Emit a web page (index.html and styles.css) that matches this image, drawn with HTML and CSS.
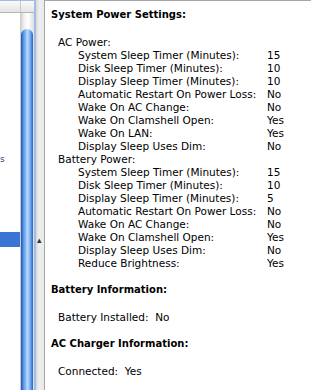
FILE: index.html
```html
<!DOCTYPE html>
<html lang="en">
<head>
    <meta charset="UTF-8">
    <title>System Power Settings</title>
    <link rel="stylesheet" href="styles.css">
</head>
<body>

    <div class="window">

        <div class="source">
            <div class="source-head">
                <div class="head-cell"></div>
                <div class="head-corner"></div>
            </div>
            <div class="source-body">
                <div class="rows">
                    <div class="row-mark">s</div>
                    <div class="row-selected"></div>
                </div>
                <div class="scrollbar">
                    <div class="thumb"></div>
                </div>
            </div>
        </div>

        <div class="splitter">
            <span class="grip">&#9652;</span>
        </div>

        <div class="detail">
            <div class="title">System Power Settings:</div>

            <div class="group">AC Power:</div>
            <div class="item"><span class="key">System Sleep Timer (Minutes):</span><span>15</span></div>
            <div class="item"><span class="key">Disk Sleep Timer (Minutes):</span><span>10</span></div>
            <div class="item"><span class="key">Display Sleep Timer (Minutes):</span><span>10</span></div>
            <div class="item"><span class="key">Automatic Restart On Power Loss:</span><span>No</span></div>
            <div class="item"><span class="key">Wake On AC Change:</span><span>No</span></div>
            <div class="item"><span class="key">Wake On Clamshell Open:</span><span>Yes</span></div>
            <div class="item"><span class="key">Wake On LAN:</span><span>Yes</span></div>
            <div class="item"><span class="key">Display Sleep Uses Dim:</span><span>No</span></div>

            <div class="group tight">Battery Power:</div>
            <div class="item"><span class="key">System Sleep Timer (Minutes):</span><span>15</span></div>
            <div class="item"><span class="key">Disk Sleep Timer (Minutes):</span><span>10</span></div>
            <div class="item"><span class="key">Display Sleep Timer (Minutes):</span><span>5</span></div>
            <div class="item"><span class="key">Automatic Restart On Power Loss:</span><span>No</span></div>
            <div class="item"><span class="key">Wake On AC Change:</span><span>No</span></div>
            <div class="item"><span class="key">Wake On Clamshell Open:</span><span>Yes</span></div>
            <div class="item"><span class="key">Display Sleep Uses Dim:</span><span>No</span></div>
            <div class="item"><span class="key">Reduce Brightness:</span><span>Yes</span></div>

            <div class="title section">Battery Information:</div>
            <div class="pair">Battery Installed:&nbsp;&nbsp;No</div>

            <div class="title section">AC Charger Information:</div>
            <div class="pair">Connected:&nbsp;&nbsp;Yes</div>
        </div>

    </div>

</body>
</html>
```

FILE: styles.css
```css
body {
    margin: 0;
    padding: 0;
    background-color: #e8e8e8;
    font-family: 'DejaVu Sans', sans-serif;
    font-size: 10.5px;
    color: #000;
    overflow: hidden;
}
.window {
    display: flex;
    height: 390px;
    width: 311px;
}
.source {
    width: 34px;
    display: flex;
    flex-direction: column;
    border-right: 2px solid #9fbde6;
    border-top: 1px solid #9fbde6;
    background-color: #fff;
}
.source-head {
    display: flex;
    height: 11px;
    background: linear-gradient(#fbfbfb, #e4e4e4);
    border-bottom: 1px solid #b4b4b4;
}
.head-cell {
    width: 20px;
    border-right: 1px solid #c8c8c8;
}
.head-corner {
    flex-grow: 1;
}
.source-body {
    flex-grow: 1;
    display: flex;
}
.rows {
    width: 20px;
    position: relative;
    overflow: hidden;
    background-color: #fff;
}
.row-mark {
    position: absolute;
    left: 0;
    top: 141px;
    font-size: 9px;
    color: #1c3f80;
}
.row-selected {
    position: absolute;
    left: 0;
    top: 219px;
    width: 20px;
    height: 15px;
    background-color: #3a75d6;
}
.scrollbar {
    flex-grow: 1;
    padding-top: 16px;
    background: linear-gradient(90deg, #c9c9c9, #f2f2f2 30%, #ffffff 60%, #dcdcdc);
    display: flex;
}
.thumb {
    flex-grow: 1;
    margin: 0 1px;
    border-radius: 7px 7px 0 0;
    background: linear-gradient(90deg, #1c4fb8, #4f8de6 18%, #9cc9f6 45%, #b8dcfb 55%, #6aa3ec 80%, #2a5fc4);
}
.splitter {
    width: 8px;
    position: relative;
    background: linear-gradient(90deg, #d9d9d9, #efefef 40%, #e9e9e9);
    border-right: 1px solid #a6a6a6;
}
.grip {
    position: absolute;
    left: 1px;
    top: 235px;
    font-size: 9px;
    color: #333;
}
.detail {
    flex-grow: 1;
    background-color: #fff;
    border-top: 1px solid #a6a6a6;
    padding: 7px 0 0 6px;
    line-height: 13px;
}
.title {
    font-weight: bold;
    font-size: 10px;
}
.title.section {
    margin-top: 13px;
}
.group {
    margin: 15px 0 0 7px;
}
.group.tight {
    margin-top: 0;
}
.item {
    display: flex;
    padding-left: 27px;
}
.key {
    width: 189px;
}
.pair {
    margin: 15px 0 13px 7px;
}
```
